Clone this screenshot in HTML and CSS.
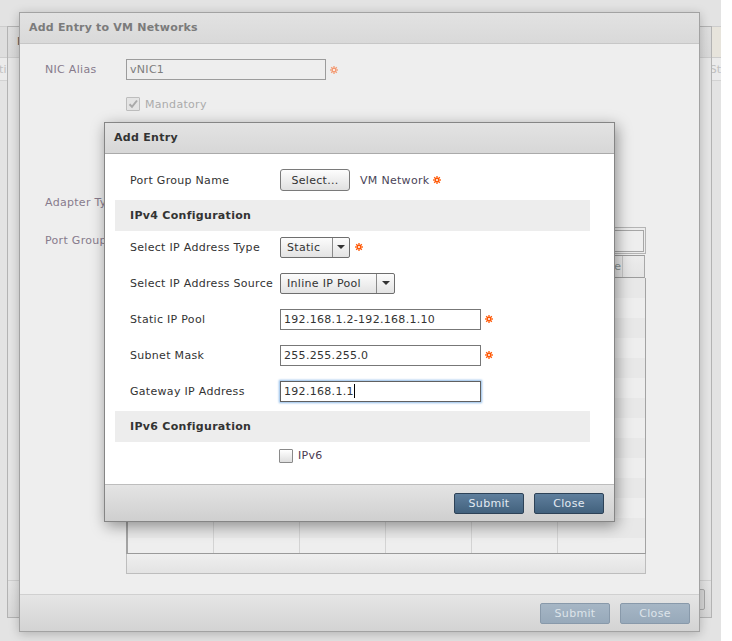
FILE: index.html
```html
<!DOCTYPE html>
<html>
<head>
<meta charset="utf-8">
<title>Add Entry</title>
<link rel="stylesheet" href="styles.css">
</head>
<body>
<div class="screen">
  <div class="page-head"></div>
  <div class="page-band"><span class="pb-left">ti</span><span class="pb-right">St</span></div>

  <div class="dlg dlg-back">
    <div class="back-head">M</div>
    <div class="back-body"></div>
    <div class="back-foot"><span class="back-btn"></span></div>
  </div>

  <div class="dlg dlg-main">
    <div class="main-head">Add Entry to VM Networks</div>
    <div class="main-body">
      <div class="m-row m-nic">
        <span class="m-label">NIC Alias</span>
        <div class="field field-off">vNIC1</div>
        <svg class="req" width="8" height="8" viewBox="0 0 8 8"><g stroke="#f39a72" stroke-width="1.3"><line x1="4" y1="0" x2="4" y2="8"/><line x1="0" y1="4" x2="8" y2="4"/><line x1="1.2" y1="1.2" x2="6.8" y2="6.8"/><line x1="6.8" y1="1.2" x2="1.2" y2="6.8"/></g><circle cx="4" cy="4" r="1.6" fill="#fff" stroke="#f39a72" stroke-width="1.1"/></svg>
      </div>
      <div class="m-row m-mand">
        <span class="m-label"></span>
        <span class="cb cb-off"><svg width="12" height="12" viewBox="0 0 12 12"><path d="M2.5 6.2 L5 8.8 L10 2.5" fill="none" stroke="#a9a9a9" stroke-width="2"/></svg></span>
        <span class="mand-text">Mandatory</span>
      </div>
      <div class="m-row m-adapter">
        <span class="m-label">Adapter Type</span>
      </div>
      <div class="m-row m-port">
        <span class="m-label m-label-port">Port Group Name</span>
        <div class="grid">
          <div class="grid-tool"><div class="grid-filter"></div></div>
          <div class="grid-head">
            <span class="gh-space"></span>
            <span class="gh-cell">Share</span>
            <span class="gh-rest"></span>
          </div>
          <div class="grid-rows">
            <div class="g-row"><span></span><span></span><span></span><span></span><span></span><span></span></div>
            <div class="g-row"><span></span><span></span><span></span><span></span><span></span><span></span></div>
            <div class="g-row"><span></span><span></span><span></span><span></span><span></span><span></span></div>
            <div class="g-row"><span></span><span></span><span></span><span></span><span></span><span></span></div>
            <div class="g-row"><span></span><span></span><span></span><span></span><span></span><span></span></div>
            <div class="g-row"><span></span><span></span><span></span><span></span><span></span><span></span></div>
            <div class="g-row"><span></span><span></span><span></span><span></span><span></span><span></span></div>
            <div class="g-row"><span></span><span></span><span></span><span></span><span></span><span></span></div>
            <div class="g-row"><span></span><span></span><span></span><span></span><span></span><span></span></div>
            <div class="g-row"><span></span><span></span><span></span><span></span><span></span><span></span></div>
            <div class="g-row"><span></span><span></span><span></span><span></span><span></span><span></span></div>
            <div class="g-row"><span></span><span></span><span></span><span></span><span></span><span></span></div>
            <div class="g-row"><span></span><span></span><span></span><span></span><span></span><span></span></div>
            <div class="g-row"><span></span><span></span><span></span><span></span><span></span><span></span></div>
          </div>
          <div class="grid-foot"></div>
        </div>
      </div>
    </div>
    <div class="main-foot">
      <span class="btn btn-off">Submit</span>
      <span class="btn btn-off">Close</span>
    </div>
  </div>

  <div class="dlg dlg-entry">
    <div class="entry-head">Add Entry</div>
    <div class="entry-body">
      <div class="e-row e-first">
        <span class="e-label">Port Group Name</span>
        <span class="sel-btn">Select...</span>
        <span class="vmnet">VM Network</span>
        <svg class="req" width="8" height="8" viewBox="0 0 8 8"><g stroke="#ff5500" stroke-width="1.3"><line x1="4" y1="0" x2="4" y2="8"/><line x1="0" y1="4" x2="8" y2="4"/><line x1="1.2" y1="1.2" x2="6.8" y2="6.8"/><line x1="6.8" y1="1.2" x2="1.2" y2="6.8"/></g><circle cx="4" cy="4" r="1.6" fill="#fff" stroke="#ff5500" stroke-width="1.1"/></svg>
      </div>
      <div class="band band-v4">IPv4 Configuration</div>
      <div class="e-row">
        <span class="e-label">Select IP Address Type</span>
        <span class="combo combo-static"><span class="combo-text">Static</span><span class="combo-arrow"></span></span>
        <svg class="req req-combo" width="8" height="8" viewBox="0 0 8 8"><g stroke="#ff5500" stroke-width="1.3"><line x1="4" y1="0" x2="4" y2="8"/><line x1="0" y1="4" x2="8" y2="4"/><line x1="1.2" y1="1.2" x2="6.8" y2="6.8"/><line x1="6.8" y1="1.2" x2="1.2" y2="6.8"/></g><circle cx="4" cy="4" r="1.6" fill="#fff" stroke="#ff5500" stroke-width="1.1"/></svg>
      </div>
      <div class="e-row">
        <span class="e-label">Select IP Address Source</span>
        <span class="combo combo-source"><span class="combo-text">Inline IP Pool</span><span class="combo-arrow"></span></span>
      </div>
      <div class="e-row">
        <span class="e-label">Static IP Pool</span>
        <div class="field field-e">192.168.1.2-192.168.1.10</div>
        <svg class="req" width="8" height="8" viewBox="0 0 8 8"><g stroke="#ff5500" stroke-width="1.3"><line x1="4" y1="0" x2="4" y2="8"/><line x1="0" y1="4" x2="8" y2="4"/><line x1="1.2" y1="1.2" x2="6.8" y2="6.8"/><line x1="6.8" y1="1.2" x2="1.2" y2="6.8"/></g><circle cx="4" cy="4" r="1.6" fill="#fff" stroke="#ff5500" stroke-width="1.1"/></svg>
      </div>
      <div class="e-row">
        <span class="e-label">Subnet Mask</span>
        <div class="field field-e">255.255.255.0</div>
        <svg class="req" width="8" height="8" viewBox="0 0 8 8"><g stroke="#ff5500" stroke-width="1.3"><line x1="4" y1="0" x2="4" y2="8"/><line x1="0" y1="4" x2="8" y2="4"/><line x1="1.2" y1="1.2" x2="6.8" y2="6.8"/><line x1="6.8" y1="1.2" x2="1.2" y2="6.8"/></g><circle cx="4" cy="4" r="1.6" fill="#fff" stroke="#ff5500" stroke-width="1.1"/></svg>
      </div>
      <div class="e-row">
        <span class="e-label">Gateway IP Address</span>
        <div class="field field-e field-focus">192.168.1.1<span class="caret"></span></div>
      </div>
      <div class="band band-v6">IPv6 Configuration</div>
      <div class="e-check-row">
        <span class="cb"></span>
        <span class="cb-text">IPv6</span>
      </div>
    </div>
    <div class="entry-foot">
      <span class="btn btn-on">Submit</span>
      <span class="btn btn-on">Close</span>
    </div>
  </div>
</div>
</body>
</html>
```

FILE: styles.css
```css
* { box-sizing: border-box; }
html, body { margin: 0; padding: 0; background: #ffffff; }
body {
  font-family: "DejaVu Sans", Verdana, sans-serif;
  font-size: 11px;
  letter-spacing: 0.3px;
  color: #333333;
}

.screen {
  position: relative;
  width: 721px;
  height: 641px;
  background: #e3e3e3;
  overflow: hidden;
  padding-top: 26px;
}

/* page behind everything */
.page-head {
  height: 31px;
  border-top: 1px solid #cdcdcd;
  background: linear-gradient(to right, #dedede 0, #dedede 30px, #e7e4dc 690px);
}
.page-band {
  height: 24px;
  border-top: 1px solid #cdcdcd;
  border-bottom: 1px solid #d2d2d2;
  background: #ebebeb;
  display: flex;
  justify-content: space-between;
  align-items: center;
  color: #c0c0c0;
}
.pb-left { margin-left: -1px; }
.pb-right { margin-right: 0; letter-spacing: 0; }

/* generic dialog window */
.dlg {
  position: absolute;
  display: flex;
  flex-direction: column;
}

/* back-most dialog */
.dlg-back {
  left: 7px;
  top: 26px;
  width: 705px;
  height: 592px;
  border: 1px solid #b3b3b3;
  background: #e5e5e5;
}
.back-head {
  flex: none;
  height: 31px;
  line-height: 30px;
  padding-left: 9px;
  border-bottom: 1px solid #cbcbcb;
  background: linear-gradient(#dedede, #d9d9d9);
  font-weight: bold;
  color: #666666;
}
.back-body { flex: 1; }
.back-foot {
  flex: none;
  height: 37px;
  border-top: 1px solid #cfcfcf;
  background: linear-gradient(#e4e4e4, #d8d8d8);
  display: flex;
  justify-content: flex-end;
  align-items: center;
  padding-right: 6px;
}
.back-btn {
  width: 60px;
  height: 21px;
  border: 1px solid #a8a8a8;
  background: #d6d6d6;
  border-radius: 2px;
}

/* main dialog */
.dlg-main {
  left: 19px;
  top: 12px;
  width: 681px;
  height: 620px;
  border: 1px solid #a2a2a2;
  background: #eeeeee;
  box-shadow: 0 2px 10px rgba(0, 0, 0, 0.22);
}
.main-head {
  flex: none;
  height: 31px;
  line-height: 30px;
  padding-left: 9px;
  border-bottom: 1px solid #c7c7c7;
  background: linear-gradient(#e2e2e2, #d9d9d9);
  font-weight: bold;
  color: #7b7b7b;
  letter-spacing: 0.2px;
}
.main-body {
  flex: 1;
  display: flex;
  flex-direction: column;
  padding-left: 25px;
}
.main-foot {
  flex: none;
  height: 37px;
  border-top: 1px solid #d0d0d0;
  background: linear-gradient(#e5e5e5, #d3d3d3);
  display: flex;
  justify-content: flex-end;
  align-items: center;
  gap: 10px;
  padding-right: 9px;
}

.m-row { display: flex; align-items: center; }
.m-label {
  width: 81px;
  flex: none;
  white-space: nowrap;
  color: #877b8c;
}
.m-nic { margin-top: 15px; height: 21px; }
.m-mand { margin-top: 17px; height: 14px; }
.m-adapter { margin-top: 81px; height: 21px; }
.m-port { margin-top: 14px; align-items: flex-start; }
.m-label-port { height: 27px; line-height: 27px; }

.field {
  width: 200px;
  height: 21px;
  border: 1px solid #777777;
  background: #ffffff;
  padding-left: 3px;
  line-height: 19px;
  color: #333333;
  white-space: nowrap;
}
.field-off {
  border-color: #9c9c9c;
  background: #eeeeee;
  color: #7d7d7d;
}
.field-e { width: 201px; }
.field-focus {
  border-color: #606060;
  box-shadow: 0 0 2px 1px #8fbbe8;
}
.caret {
  display: inline-block;
  width: 1px;
  height: 14px;
  background: #000000;
  vertical-align: -3px;
}

.req { flex: none; margin-left: 4px; }
.req-combo { margin-left: 5px; }

.cb {
  flex: none;
  width: 14px;
  height: 14px;
  border: 1px solid #8a8a8a;
  border-radius: 1px;
  background: linear-gradient(#ffffff, #dedede);
}
.cb-off {
  border-color: #bdbdbd;
  background: #e4e4e4;
  display: flex;
  align-items: center;
  justify-content: center;
}
.mand-text { margin-left: 5px; color: #ababab; }

/* grid behind the entry dialog */
.grid {
  width: 520px;
  display: flex;
  flex-direction: column;
}
.grid-tool {
  height: 27px;
  border: 1px solid #b4b4b4;
  background: #ececec;
  display: flex;
  justify-content: flex-end;
  align-items: center;
  padding-right: 1px;
}
.grid-filter {
  width: 200px;
  height: 22px;
  border: 1px solid #a6a6a6;
  background: #eeeeee;
}
.grid-head {
  margin-top: 1px;
  height: 23px;
  border-top: 1px solid #9c9c9c;
  border-bottom: 1px solid #9c9c9c;
  border-left: 1px solid #a8a8a8;
  border-right: 1px solid #a8a8a8;
  background: linear-gradient(#ececec, #e4e4e4);
  display: flex;
  margin-right: 1px;
}
.gh-space { width: 431px; flex: none; }
.gh-cell {
  width: 65px;
  flex: none;
  border-right: 1px solid #c9c9c9;
  text-align: right;
  padding-right: 1px;
  line-height: 21px;
  overflow: hidden;
  white-space: nowrap;
  letter-spacing: 0;
  color: #8a9595;
}
.gh-rest { flex: 1; }
.grid-rows {
  height: 276px;
  overflow: hidden;
  border-left: 2px solid #a3a3a3;
  border-right: 1px solid #a3a3a3;
  border-bottom: 1px solid #9a9a9a;
}
.g-row {
  display: grid;
  grid-template-columns: 86px 86px 86px 86px 86px 1fr;
  height: 20px;
  background: #eeeeee;
}
.g-row:nth-child(odd) { background: #e8e8e8; }
.g-row span { border-right: 1px solid #d3d3d3; }
.g-row span:last-child { border-right: none; }
.grid-foot {
  height: 20px;
  border: 1px solid #bdbdbd;
  border-top: none;
  background: linear-gradient(#efefef, #e3e3e3);
}

/* buttons */
.btn {
  width: 70px;
  height: 21px;
  display: flex;
  align-items: center;
  justify-content: center;
  border-radius: 2px;
}
.btn-on {
  background: linear-gradient(#5f7f9d, #42617d);
  border: 1px solid #2d4257;
  color: #e2eaf2;
}
.btn-off {
  background: linear-gradient(#a6b6c5, #97a9ba);
  border: 1px solid #8899aa;
  color: #dde4ea;
}

/* entry dialog */
.dlg-entry {
  left: 104px;
  top: 122px;
  width: 511px;
  height: 400px;
  border: 1px solid #858585;
  background: #ffffff;
  box-shadow: 2px 4px 14px rgba(0, 0, 0, 0.4);
}
.entry-head {
  flex: none;
  height: 31px;
  line-height: 30px;
  padding-left: 9px;
  border-bottom: 1px solid #aaaaaa;
  background: linear-gradient(#e3e3e3, #d7d7d7);
  font-weight: bold;
  color: #333333;
}
.entry-body {
  flex: 1;
  padding-top: 8px;
}
.entry-foot {
  flex: none;
  height: 37px;
  border-top: 1px solid #bdbdbd;
  background: linear-gradient(#e4e4e4, #cfcfcf);
  display: flex;
  justify-content: flex-end;
  align-items: center;
  gap: 10px;
  padding-right: 10px;
}

.e-row {
  display: flex;
  align-items: center;
  height: 36px;
  padding-left: 25px;
}
.e-label {
  width: 150px;
  flex: none;
  white-space: nowrap;
}
.sel-btn {
  width: 70px;
  height: 22px;
  border: 1px solid #7a7a7a;
  border-radius: 3px;
  background: linear-gradient(#fdfdfd, #e0e0e0);
  display: flex;
  align-items: center;
  justify-content: center;
}
.vmnet { margin-left: 10px; color: #4a4458; }

.band {
  height: 31px;
  line-height: 31px;
  margin: 2px 24px 0 10px;
  padding-left: 15px;
  background: #ededed;
  font-weight: bold;
  color: #333333;
}
.band-v4 { margin-bottom: -2px; }

.combo {
  display: flex;
  height: 21px;
  border: 1px solid #6e6e6e;
  border-radius: 2px;
  background: linear-gradient(#fcfcfc, #e3e3e3);
}
.combo-text {
  flex: none;
  padding-left: 6px;
  line-height: 19px;
  white-space: nowrap;
}
.combo-static { width: 70px; }
.combo-static .combo-text { width: 51px; }
.combo-source { width: 115px; }
.combo-source .combo-text { width: 95px; }
.combo-arrow {
  flex: 1;
  border-left: 1px solid #8a8a8a;
  display: flex;
  align-items: center;
  justify-content: center;
}
.combo-arrow::after {
  content: "";
  border-left: 4px solid transparent;
  border-right: 4px solid transparent;
  border-top: 4px solid #333333;
}

.e-check-row {
  height: 27px;
  display: flex;
  align-items: center;
  padding-left: 174px;
}
.cb-text { margin-left: 5px; color: #4a3a52; }
```
